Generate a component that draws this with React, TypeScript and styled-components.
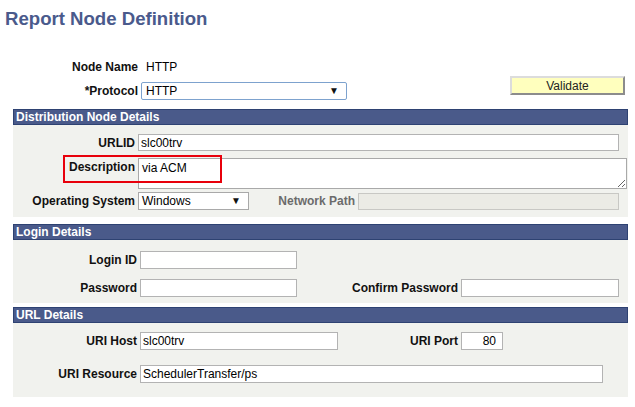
import React from "react";
import styled, { createGlobalStyle } from "styled-components";

const GlobalStyle = createGlobalStyle`
  body {
    margin: 0;
    background: #ffffff;
    font-family: "Liberation Sans", Arial, sans-serif;
    font-size: 12px;
    color: #000;
  }
`;

const Page = styled.div`
  width: 635px;
  height: 407px;
  overflow: hidden;
`;

const Title = styled.h1`
  margin: 0;
  padding: 8px 5px 0;
  font-size: 18.6px;
  line-height: 21px;
  font-weight: bold;
  color: #4a5a8c;
`;

const TopArea = styled.div`
  display: flex;
  justify-content: space-between;
  align-items: flex-start;
  padding: 31px 10px 0 0;
`;

const TopFields = styled.div`
  display: flex;
  flex-direction: column;
  gap: 8px;
`;

const Row = styled.div<{ $mt?: number; $top?: boolean }>`
  position: relative;
  display: flex;
  align-items: ${(p) => (p.$top ? "flex-start" : "center")};
  margin-top: ${(p) => p.$mt ?? 0}px;
`;

const Label = styled.label<{ $w: number; $muted?: boolean; $pt?: number }>`
  width: ${(p) => p.$w}px;
  flex: none;
  box-sizing: border-box;
  padding-right: 3px;
  padding-top: ${(p) => p.$pt ?? 0}px;
  text-align: right;
  font-weight: bold;
  font-size: 12px;
  line-height: 14px;
  color: ${(p) => (p.$muted ? "#6b6b6b" : "#111")};
  white-space: nowrap;
`;

const StaticValue = styled.span`
  padding-left: 5px;
  line-height: 14px;
  font-size: 12px;
`;

const SelectBox = styled.div<{ $w: number; $focus?: boolean }>`
  width: ${(p) => p.$w}px;
  height: 18px;
  box-sizing: border-box;
  display: flex;
  align-items: center;
  justify-content: space-between;
  padding: 0 7px 0 ${(p) => (p.$focus ? 4 : 3)}px;
  background: #fff;
  border: 1px solid ${(p) => (p.$focus ? "#7da2ce" : "#a9a9a9")};
  border-radius: ${(p) => (p.$focus ? "2px" : "0")};
  font-size: 12px;
  line-height: 16px;
`;

const Arrow = styled.span`
  font-size: 10px;
  line-height: 1;
  color: #111;
`;

const ValidateButton = styled.button`
  width: 115px;
  height: 19px;
  margin-top: 16px;
  padding: 0;
  background: #ffffbe;
  border: 2px solid;
  border-color: #dcdcdc #8c8c8c #8c8c8c #dcdcdc;
  font-family: "Liberation Sans", Arial, sans-serif;
  font-size: 12px;
  color: #222;
  cursor: pointer;
`;

const Section = styled.section<{ $mt: number }>`
  margin: ${(p) => p.$mt}px 0 0 13px;
  width: 615px;
`;

const SectionHeader = styled.div`
  height: 16px;
  box-sizing: border-box;
  padding-left: 2px;
  background: #4a5a8a;
  border: 1px solid #2e4272;
  color: #fff;
  font-weight: bold;
  font-size: 12px;
  line-height: 14px;
`;

const SectionBody = styled.div<{ $pt: number; $pb: number }>`
  background: #f1f2ee;
  padding: ${(p) => p.$pt}px 0 ${(p) => p.$pb}px;
`;

const TextField = styled.input<{ $w: number; $h?: number; $right?: boolean; $disabled?: boolean }>`
  width: ${(p) => p.$w}px;
  height: ${(p) => p.$h ?? 17}px;
  box-sizing: border-box;
  margin: 0;
  padding: 0 ${(p) => (p.$right ? "6px" : "1px")} 0 2px;
  border: 1px solid ${(p) => (p.$disabled ? "#c8c8c4" : "#b3b3b3")};
  background: ${(p) => (p.$disabled ? "#ebebe5" : "#fff")};
  font-family: "Liberation Sans", Arial, sans-serif;
  font-size: 12px;
  color: #000;
  text-align: ${(p) => (p.$right ? "right" : "left")};
  outline: none;
`;

const TextBox = styled.textarea`
  width: 489px;
  height: 31px;
  box-sizing: border-box;
  margin: 0;
  padding: 2px 3px;
  border: 1px solid #a9a9a9;
  background: #fff;
  font-family: "Liberation Sans", Arial, sans-serif;
  font-size: 12px;
  line-height: 14px;
  resize: both;
  outline: none;
`;

const Highlight = styled.div`
  position: absolute;
  left: 50px;
  top: -3px;
  width: 159px;
  height: 28px;
  box-sizing: border-box;
  border: 2px solid #e8000b;
  pointer-events: none;
`;

export default function App() {
  return (
    <Page>
      <GlobalStyle />
      <Title>Report Node Definition</Title>

      <TopArea>
        <TopFields>
          <Row>
            <Label $w={141}>Node Name</Label>
            <StaticValue>HTTP</StaticValue>
          </Row>
          <Row>
            <Label $w={141}>*Protocol</Label>
            <SelectBox $w={206} $focus>
              <span>HTTP</span>
              <Arrow>▼</Arrow>
            </SelectBox>
          </Row>
        </TopFields>
        <ValidateButton>Validate</ValidateButton>
      </TopArea>

      <Section $mt={9}>
        <SectionHeader>Distribution Node Details</SectionHeader>
        <SectionBody $pt={9} $pb={7}>
          <Row>
            <Label $w={125}>URLID</Label>
            <TextField $w={481} readOnly value="slc00trv" />
          </Row>
          <Row $mt={7} $top>
            <Label $w={125} $pt={2}>Description</Label>
            <TextBox readOnly value="via ACM" />
            <Highlight />
          </Row>
          <Row $mt={3}>
            <Label $w={125}>Operating System</Label>
            <SelectBox $w={111}>
              <span>Windows</span>
              <Arrow>▼</Arrow>
            </SelectBox>
            <Label $w={109} $muted>Network Path</Label>
            <TextField $w={261} $disabled readOnly value="" />
          </Row>
        </SectionBody>
      </Section>

      <Section $mt={7}>
        <SectionHeader>Login Details</SectionHeader>
        <SectionBody $pt={11} $pb={6}>
          <Row>
            <Label $w={127}>Login ID</Label>
            <TextField $w={157} $h={18} readOnly value="" />
          </Row>
          <Row $mt={10}>
            <Label $w={127}>Password</Label>
            <TextField $w={157} $h={18} type="password" readOnly value="" />
            <Label $w={164}>Confirm Password</Label>
            <TextField $w={158} $h={18} type="password" readOnly value="" />
          </Row>
        </SectionBody>
      </Section>

      <Section $mt={4}>
        <SectionHeader>URL Details</SectionHeader>
        <SectionBody $pt={9} $pb={14}>
          <Row>
            <Label $w={127}>URI Host</Label>
            <TextField $w={198} $h={18} readOnly value="slc00trv" />
            <Label $w={123}>URI Port</Label>
            <TextField $w={42} $h={18} $right readOnly value="80" />
          </Row>
          <Row $mt={15}>
            <Label $w={127}>URI Resource</Label>
            <TextField $w={463} $h={18} readOnly value="SchedulerTransfer/ps" />
          </Row>
        </SectionBody>
      </Section>
    </Page>
  );
}
